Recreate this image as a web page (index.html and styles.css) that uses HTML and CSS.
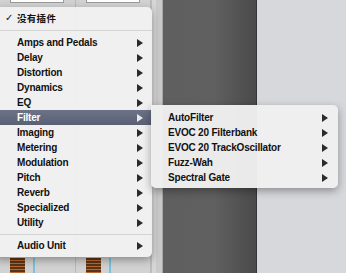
FILE: index.html
```html
<!DOCTYPE html>
<html lang="en">
<head>
  <meta charset="UTF-8" />
  <title>Plug-in Menu</title>
  <link rel="stylesheet" href="styles.css">
</head>
<body>
  <div class="stage">
    <div class="mixer">
      <div class="strip">
        <div class="slot"></div>
        <div class="meter-row"><div class="meter"></div><div class="fader-line"></div></div>
      </div>
      <div class="strip">
        <div class="slot"></div>
        <div class="meter-row"><div class="meter"></div><div class="fader-line"></div></div>
      </div>
      <div class="rail"></div>
    </div>
    <div class="dark-panel"></div>
    <div class="light-panel"></div>

    <div class="menu">
      <div class="item"><span class="check">✓</span><span class="label cjk">没有插件</span><span></span></div>
      <div class="sep"></div>
      <div class="item"><span></span><span class="label">Amps and Pedals</span><span class="arrow"></span></div>
      <div class="item"><span></span><span class="label">Delay</span><span class="arrow"></span></div>
      <div class="item"><span></span><span class="label">Distortion</span><span class="arrow"></span></div>
      <div class="item"><span></span><span class="label">Dynamics</span><span class="arrow"></span></div>
      <div class="item"><span></span><span class="label">EQ</span><span class="arrow"></span></div>
      <div class="item active"><span></span><span class="label">Filter</span><span class="arrow"></span></div>
      <div class="item"><span></span><span class="label">Imaging</span><span class="arrow"></span></div>
      <div class="item"><span></span><span class="label">Metering</span><span class="arrow"></span></div>
      <div class="item"><span></span><span class="label">Modulation</span><span class="arrow"></span></div>
      <div class="item"><span></span><span class="label">Pitch</span><span class="arrow"></span></div>
      <div class="item"><span></span><span class="label">Reverb</span><span class="arrow"></span></div>
      <div class="item"><span></span><span class="label">Specialized</span><span class="arrow"></span></div>
      <div class="item"><span></span><span class="label">Utility</span><span class="arrow"></span></div>
      <div class="sep sep-low"></div>
      <div class="item"><span></span><span class="label">Audio Unit</span><span class="arrow"></span></div>
    </div>

    <div class="submenu">
      <div class="sub-item"><span class="label">AutoFilter</span><span class="arrow"></span></div>
      <div class="sub-item"><span class="label">EVOC 20 Filterbank</span><span class="arrow"></span></div>
      <div class="sub-item"><span class="label">EVOC 20 TrackOscillator</span><span class="arrow"></span></div>
      <div class="sub-item"><span class="label">Fuzz-Wah</span><span class="arrow"></span></div>
      <div class="sub-item"><span class="label">Spectral Gate</span><span class="arrow"></span></div>
    </div>
  </div>
</body>
</html>
```

FILE: styles.css
```css
body {
  margin: 0;
  font-family: "Liberation Sans", Arial, "Noto Sans CJK SC", sans-serif;
  overflow: hidden;
}

.stage {
  position: relative;
  display: flex;
  width: 346px;
  height: 273px;
  overflow: hidden;
  background: #d7d8dc;
}

.mixer {
  display: flex;
  width: 163px;
  background: #d2d2d2;
}

.strip {
  display: flex;
  flex-direction: column;
  justify-content: space-between;
  width: 76px;
  border-right: 1px solid #b9b9b9;
}

.slot {
  margin: 0 0 0 10px;
  width: 52px;
  height: 2px;
  background: #fff;
  border: 1px solid #9a9a9a;
  border-top: none;
}

.meter-row {
  display: flex;
  gap: 8px;
  height: 15px;
  padding-left: 10px;
}

.meter {
  width: 15px;
  background: repeating-linear-gradient(#5a3418 0 2px, #b86a32 2px 3px);
}

.fader-line {
  width: 2px;
  background: #79c3da;
}

.rail {
  width: 10px;
  background: #cacaca;
  border-left: 1px solid #bdbdbd;
  border-right: 1px solid #a8a8a8;
  box-shadow: inset 4px 0 0 #d6d6d6;
}

.dark-panel {
  width: 93px;
  background: linear-gradient(to right, #5f5f5f 0, #606060 55%, #4a4a4a 100%);
  border-right: 1px solid #353535;
}

.light-panel {
  flex: 1;
  background: #d7d8dc;
}

.menu {
  position: absolute;
  left: -6px;
  top: 7px;
  width: 158px;
  padding: 3px 0 4px;
  background: rgba(240, 240, 240, 0.96);
  border-radius: 5px;
  box-shadow: 0 3px 9px rgba(0, 0, 0, 0.35);
}

.item {
  display: grid;
  grid-template-columns: 23px 1fr auto;
  align-items: center;
  height: 15px;
  padding-right: 9px;
  color: #111;
}

.label {
  font-size: 10px;
  font-weight: bold;
  letter-spacing: -0.2px;
  white-space: nowrap;
}

.cjk {
  font-family: "Noto Sans CJK SC", sans-serif;
  font-size: 9.5px;
  font-weight: bold;
  letter-spacing: 0.3px;
}

.check {
  padding-left: 11px;
  font-size: 10px;
  font-weight: bold;
  font-family: "DejaVu Sans", sans-serif;
}

.arrow {
  width: 0;
  height: 0;
  border-top: 4px solid transparent;
  border-bottom: 4px solid transparent;
  border-left: 6px solid #2a2a2a;
}

.item.active {
  background: linear-gradient(#6d7387, #5a6074);
  color: #fff;
}

.item.active .arrow {
  border-left-color: #e8e8ee;
}

.sep {
  height: 10px;
  background: linear-gradient(transparent 5px, #d4d4d4 5px, #d4d4d4 6px, transparent 6px);
}

.sep-low {
  height: 8px;
  background: linear-gradient(transparent 4px, #d4d4d4 4px, #d4d4d4 5px, transparent 5px);
}

.submenu {
  position: absolute;
  left: 151px;
  top: 105px;
  width: 187px;
  padding: 5px 0 3px;
  background: rgba(240, 240, 240, 0.97);
  border-radius: 0 5px 5px 5px;
  box-shadow: 0 3px 9px rgba(0, 0, 0, 0.35);
}

.sub-item {
  display: flex;
  align-items: center;
  justify-content: space-between;
  height: 15px;
  padding: 0 10px 0 17px;
  color: #111;
}
```
